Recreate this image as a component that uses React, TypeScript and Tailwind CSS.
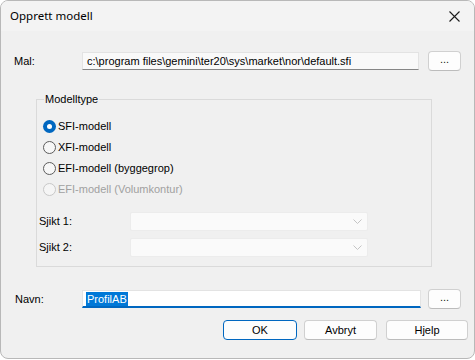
import React from "react";

const Radio = ({ checked, disabled, label }: { checked?: boolean; disabled?: boolean; label: string }) => (
  <div className="flex items-center h-[21px] ml-[6px]">
    {checked ? (
      <div className="w-[13px] h-[13px] rounded-full bg-[#0067c0] flex items-center justify-center">
        <div className="w-[5px] h-[5px] rounded-full bg-white" />
      </div>
    ) : (
      <div
        className={
          disabled
            ? "w-[13px] h-[13px] rounded-full border border-[#c8c8c8] bg-[#f5f5f5]"
            : "w-[13px] h-[13px] rounded-full border border-[#5c5c5c] bg-[#f7f7f7]"
        }
      />
    )}
    <span className={disabled ? "ml-[2px] text-[#a0a0a0]" : "ml-[2px] text-black"}>{label}</span>
  </div>
);

const Combo = () => (
  <div className="w-[238px] h-[19px] bg-[#fafafa] border border-[#ececec] rounded-[2px] flex items-center justify-end pr-[5px]">
    <svg width="9" height="5" viewBox="0 0 9 5">
      <path d="M0.5 0.5 L4.5 4.5 L8.5 0.5" fill="none" stroke="#c4c4c4" strokeWidth="1" />
    </svg>
  </div>
);

const Btn = ({ children, w, primary }: { children: React.ReactNode; w: string; primary?: boolean }) => (
  <div
    className={
      (primary ? "border-[#0067c0] " : "border-[#d0d0d0] border-b-[#bcbcbc] ") +
      w +
      " h-[20px] rounded-[4px] border bg-[#fdfdfd] flex items-center justify-center text-black"
    }
  >
    {children}
  </div>
);

export default function App() {
  return (
    <div className="w-[475px] h-[360px] bg-white" style={{ fontFamily: '"Liberation Sans", Arial, sans-serif' }}>
      <div className="w-[475px] h-[359px] rounded-[8px] border border-[#b8b8b8] overflow-hidden flex flex-col text-[11px] bg-[#f0f0f0]">
        <div className="h-[30px] bg-[#f3f3f3] flex items-center justify-between pl-[9px] pr-[10px] shrink-0">
          <span className="text-[11.5px] text-black" style={{ fontFamily: '"Noto Sans", "Open Sans", sans-serif' }}>
            Opprett modell
          </span>
          <svg width="11" height="11" viewBox="0 0 11 11" className="mr-[4px]">
            <path d="M0.5 0.5 L10.5 10.5 M10.5 0.5 L0.5 10.5" stroke="#1c1c1c" strokeWidth="1.1" fill="none" />
          </svg>
        </div>
        <div className="flex-1 flex flex-col">
          <div className="flex items-center h-[18px] mt-[21px]">
            <span className="w-[81px] shrink-0 pl-[13px] text-black">Mal:</span>
            <div className="w-[337px] h-[18px] bg-[#f9f9f9] border border-[#e3e3e3] border-b-[#868686] flex items-center pl-[4px] text-black">
              c:\program files\gemini\ter20\sys\market\nor\default.sfi
            </div>
            <div className="ml-[9px]">
              <Btn w="w-[33px]">
                <span className="-mt-[3px] text-[#1a1a1a]">...</span>
              </Btn>
            </div>
          </div>

          <fieldset className="mt-[23px] ml-[35px] w-[396px] border border-[#dadada] pb-[9px] min-w-0">
            <legend className="ml-[7px] px-[1px] leading-[13px] text-black">Modelltype</legend>
            <div className="pt-[10px] flex flex-col">
              <Radio checked label="SFI-modell" />
              <Radio label="XFI-modell" />
              <Radio label="EFI-modell (byggegrop)" />
              <Radio disabled label="EFI-modell (Volumkontur)" />
            </div>
            <div className="mt-[12px] flex flex-col gap-[7px]">
              <div className="flex items-center">
                <span className="w-[93px] pl-[2px] text-black">Sjikt 1:</span>
                <Combo />
              </div>
              <div className="flex items-center">
                <span className="w-[93px] pl-[2px] text-black">Sjikt 2:</span>
                <Combo />
              </div>
            </div>
          </fieldset>

          <div className="flex items-center h-[18px] mt-[23px]">
            <span className="w-[81px] shrink-0 pl-[14px] text-black">Navn:</span>
            <div className="w-[339px] h-[18px] bg-white border border-[#e3e3e3] border-b-2 border-b-[#0067c0] flex items-center pl-[3px]">
              <span className="bg-[#0078d7] text-white px-[1px] leading-[14px]">ProfilAB</span>
            </div>
            <div className="ml-[7px]">
              <Btn w="w-[33px]">
                <span className="-mt-[3px] text-[#1a1a1a]">...</span>
              </Btn>
            </div>
          </div>

          <div className="flex mt-[12px] pl-[222px]">
            <Btn w="w-[74px]" primary>OK</Btn>
            <div className="ml-[7px]">
              <Btn w="w-[73px]">Avbryt</Btn>
            </div>
            <div className="ml-[9px]">
              <Btn w="w-[82px]">Hjelp</Btn>
            </div>
          </div>
        </div>
      </div>
    </div>
  );
}
